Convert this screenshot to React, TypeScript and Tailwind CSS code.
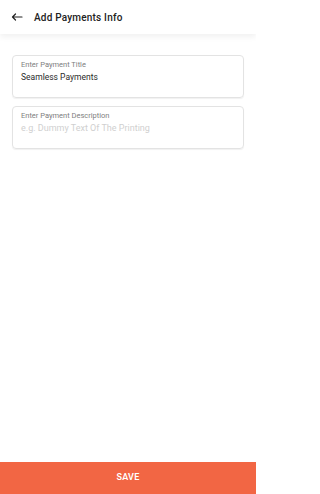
import React from "react";

export default function App() {
  return (
    <div
      className="w-[256px] h-[494px] bg-white flex flex-col overflow-hidden"
      style={{ fontFamily: "Roboto, 'Noto Sans', sans-serif" }}
    >
      <div className="h-[34px] shrink-0 flex items-center bg-white shadow-[0_3px_6px_rgba(0,0,0,0.06)] z-10">
        <svg width="12" height="8" viewBox="0 0 12 8" className="ml-[11px]">
          <path d="M11 4H1.5M4.5 1L1.5 4L4.5 7" stroke="#222" strokeWidth="1.2" fill="none" strokeLinecap="round" strokeLinejoin="round" />
        </svg>
        <span className="ml-[11px] text-[10px] font-medium text-[#222] tracking-[0.2px]">Add Payments Info</span>
      </div>
      <div className="flex-1 flex flex-col gap-[8px] px-[12px] pt-[21px]">
        <div className="h-[43px] rounded-[4px] border border-[#e3e3e3] shadow-[0_1px_1px_rgba(0,0,0,0.06)] px-[8px] pt-[4px] flex flex-col">
          <span className="text-[7.5px] leading-[10px] text-[#808080]">Enter Payment Title</span>
          <span className="text-[8.5px] leading-[13px] text-[#2a2a2a] mt-[1px]">Seamless Payments</span>
        </div>
        <div className="h-[43px] rounded-[4px] border border-[#e3e3e3] shadow-[0_1px_1px_rgba(0,0,0,0.06)] px-[8px] pt-[4px] flex flex-col">
          <span className="text-[7.5px] leading-[10px] text-[#808080]">Enter Payment Description</span>
          <span className="text-[9px] leading-[13px] text-[#d0d0d0] mt-[1px]">e.g. Dummy Text Of The Printing</span>
        </div>
      </div>
      <div className="h-[32px] shrink-0 bg-[#f26644] flex items-center justify-center">
        <span className="text-[9px] font-semibold text-white tracking-[0.2px]">SAVE</span>
      </div>
    </div>
  );
}
